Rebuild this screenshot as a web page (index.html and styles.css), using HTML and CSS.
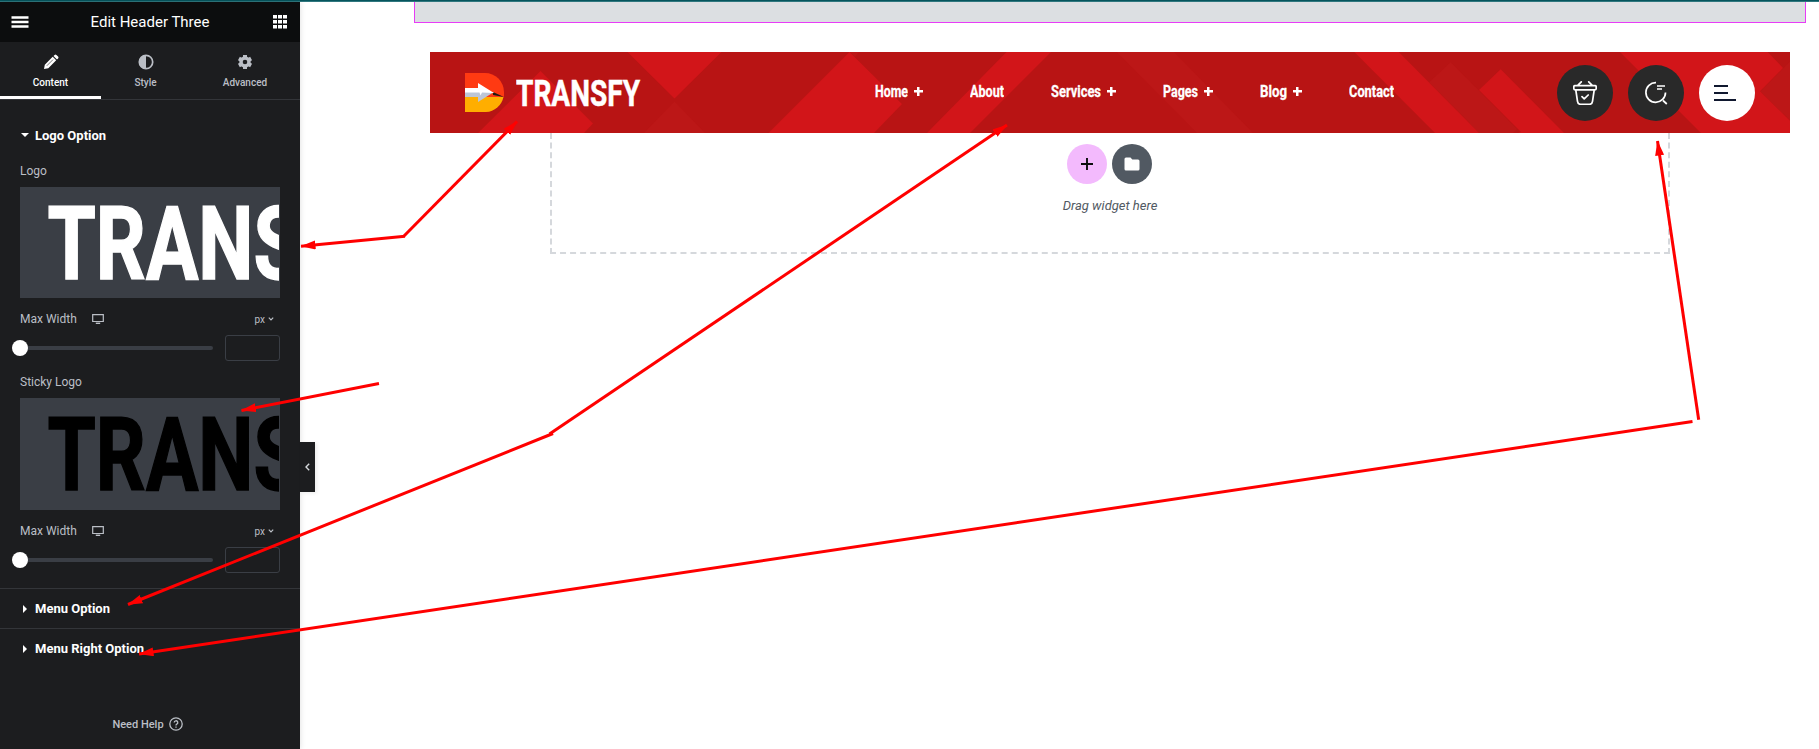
FILE: index.html
```html
<!DOCTYPE html>
<html lang="en">
<head>
<meta charset="utf-8">
<title>Edit Header Three</title>
<link rel="stylesheet" href="styles.css">
</head>
<body>
<div class="topline"></div>
<div class="app">
  <aside class="panel">
    <header class="panel-head">
      <svg width="18" height="12" viewBox="0 0 18 12"><path d="M0.500 1.500h17M0.500 6h17M0.500 10.500h17" stroke="#fff" stroke-width="2.400"/></svg>
      <h1>Edit Header Three</h1>
      <svg width="14" height="14" viewBox="0 0 14 14" fill="#fff"><path d="M0 0h4v3.500H0zM5 0h4v3.500H5zM10 0h4v3.500h-4zM0 5h4v3.500H0zM5 5h4v3.500H5zM10 5h4v3.500h-4zM0 10h4v3.500H0zM5 10h4v3.500H5zM10 10h4v3.500h-4z"/></svg>
    </header>
    <nav class="tabs">
      <div class="tab active">
        <svg width="16" height="16" viewBox="0 0 16 16" fill="#fff"><path d="M1 15l.8-4.300L9.700 2.800l3.500 3.500-7.900 7.900zM10.500 2l1.100-1.100a1.300 1.300 0 0 1 1.800 0l1.700 1.700a1.300 1.300 0 0 1 0 1.800L14 5.500z"/><path d="M3.800 11.800l6.200-6.200" stroke="#1c1d1f" stroke-width=".6"/></svg>
        <span>Content</span>
      </div>
      <div class="tab style">
        <svg width="16" height="16" viewBox="0 0 16 16"><circle cx="8" cy="8" r="6.700" fill="none" stroke="#bbbfc6" stroke-width="1.700"/><path d="M8 1a7 7 0 0 0 0 14z" fill="#bbbfc6"/></svg>
        <span>Style</span>
      </div>
      <div class="tab">
        <svg width="16" height="16" viewBox="0 0 16 16"><circle cx="8" cy="8" r="4" fill="none" stroke="#bbbfc6" stroke-width="3.400"/><g stroke="#bbbfc6" stroke-width="4"><path d="M8 1v2.500M8 12.500V15M1.900 4.500l2.200 1.200M11.900 10.300l2.200 1.200M1.900 11.500l2.200-1.200M11.900 5.700l2.200-1.200"/></g></svg>
        <span>Advanced</span>
      </div>
    </nav>
    <section class="section-open">
      <h2 class="section-title"><i class="caret down"></i>Logo Option</h2>
      <div class="label">Logo</div>
      <div class="preview">
        <svg width="260" height="111"><text class="brand large" x="27.500" y="91.500" textLength="254" lengthAdjust="spacingAndGlyphs">TRANS</text></svg>
      </div>
      <div class="control-row">
        <span>Max Width</span>
        <svg class="device" width="12" height="10" viewBox="0 0 12 10"><path d="M.7.700h10.600v6.800H.7z" fill="none" stroke="#bbbfc6" stroke-width="1.200"/><path d="M3.800 9.300h4.400" stroke="#bbbfc6" stroke-width="1.400"/></svg>
        <span class="unit">px<svg width="6" height="4" viewBox="0 0 6 4"><path d="M.8.700L3 2.900 5.200.700" fill="none" stroke="#bbbfc6" stroke-width="1.200"/></svg></span>
      </div>
      <div class="slider-row"><div class="track"><b></b></div><div class="num"></div></div>
      <div class="label second">Sticky Logo</div>
      <div class="preview sticky">
        <svg width="260" height="112"><text class="brand large black" x="27.500" y="91.500" textLength="254" lengthAdjust="spacingAndGlyphs">TRANS</text></svg>
      </div>
      <div class="control-row">
        <span>Max Width</span>
        <svg class="device" width="12" height="10" viewBox="0 0 12 10"><path d="M.7.700h10.600v6.800H.7z" fill="none" stroke="#bbbfc6" stroke-width="1.200"/><path d="M3.800 9.300h4.400" stroke="#bbbfc6" stroke-width="1.400"/></svg>
        <span class="unit">px<svg width="6" height="4" viewBox="0 0 6 4"><path d="M.8.700L3 2.900 5.200.700" fill="none" stroke="#bbbfc6" stroke-width="1.200"/></svg></span>
      </div>
      <div class="slider-row"><div class="track"><b></b></div><div class="num"></div></div>
    </section>
    <h2 class="section-title closed"><i class="caret right"></i>Menu Option</h2>
    <h2 class="section-title closed"><i class="caret right"></i>Menu Right Option</h2>
    <footer class="help">Need Help
      <svg width="14" height="14" viewBox="0 0 14 14" fill="none" stroke="#bbbfc6"><circle cx="7" cy="7" r="6.200" stroke-width="1.300"/><path d="M5.200 5.600a1.800 1.800 0 1 1 2.600 1.600Q7 7.600 7 8.500M7 9.500v1.200" stroke-width="1.300"/></svg>
    </footer>
    <div class="collapse"><svg width="5" height="8" viewBox="0 0 5 8"><path d="M4.200.700L1 4l3.200 3.300" fill="none" stroke="#d5d8dc" stroke-width="1.400"/></svg></div>
  </aside>
  <main class="canvas">
    <div class="outline"></div>
    <div class="site-header">
      <svg class="pattern" width="1360" height="81" viewBox="430 52 1360 81">
        <g fill="#bc1717"><path d="M674.500 101.500L705 133h-61zM1116.700 52H1174l79 81h-56zM850 52h9l-4 5zM1450.700 62.300L1517 129l-4 4h-34l-50-50.500zM1790 61.700v59L1760 91.300z"/></g>
        <g fill="#d21519"><path d="M540.500 71L593 123.500l-9 9.500H478zM627.500 52h94l-47 46.500zM849.500 52L902 104l-28 29H768.500zM1006.500 52H1051l-81 81h-43zM1354.300 52h44.500l80.200 81h-44zM1500.700 69.300L1564 133h-46l3-1L1479 90zM1620 52h147.700L1783 68l-23 23.300 30 29.400V133h-89z"/></g>
      </svg>
      <div class="logo">
        <svg width="39" height="39" viewBox="0 0 39 39"><path d="M0 24V0h20a19 19 0 0 1 19 19v5z" fill="#ff3a12"/><path d="M0 24h38.500A19 19 0 0 1 21 39H0z" fill="#ffae00"/><path d="M28 19l11 5-11-2z" fill="#201a12"/><path d="M0 19h29L13 29v-5H0z" fill="#bcc6d6"/><path d="M0 15h13v-5l16 10-12-.500-1.500 3-1-3H0z" fill="#fff"/></svg>
        <svg width="128" height="44"><text class="brand small" x="0" y="35" textLength="124" lengthAdjust="spacingAndGlyphs">TRANSFY</text></svg>
      </div>
      <nav class="menu">
        <a><svg width="33" height="22"><text class="word" y="16" textLength="33" lengthAdjust="spacingAndGlyphs">Home</text></svg><i class="plus"></i></a>
        <a><svg width="34" height="22"><text class="word" y="16" textLength="34" lengthAdjust="spacingAndGlyphs">About</text></svg></a>
        <a><svg width="50" height="22"><text class="word" y="16" textLength="50" lengthAdjust="spacingAndGlyphs">Services</text></svg><i class="plus"></i></a>
        <a><svg width="35" height="22"><text class="word" y="16" textLength="35" lengthAdjust="spacingAndGlyphs">Pages</text></svg><i class="plus"></i></a>
        <a><svg width="27" height="22"><text class="word" y="16" textLength="27" lengthAdjust="spacingAndGlyphs">Blog</text></svg><i class="plus"></i></a>
        <a><svg width="45" height="22"><text class="word" y="16" textLength="45" lengthAdjust="spacingAndGlyphs">Contact</text></svg></a>
      </nav>
      <div class="actions">
        <span class="round"><svg width="24" height="24" viewBox="0 0 24 24" fill="none" stroke="#fff" stroke-width="1.700" stroke-linecap="round" stroke-linejoin="round"><path d="M8.300.800L5 4.200M15.700.800L19 4.200M2 4.600h20q1.200 0 1.200 1.200v1.600q0 1.400-1.400 1.400H2.200Q.8 8.800.8 7.400V5.800q0-1.200 1.200-1.200zM2.800 9l1.700 11.300q.4 3 3 3h9q2.600 0 3-3L21.200 9M9 15.700l2.200 2.200 4-3.900"/></svg></span>
        <span class="round"><svg width="24" height="24" viewBox="0 0 24 24" fill="none" stroke="#fff" stroke-width="1.700"><path d="M12 1.700A9.800 9.800 0 1 0 21.500 11.500M19 19.500l3.800 3.500M13 5h8M13 8h5"/></svg></span>
        <span class="round white"><svg width="26" height="18" viewBox="0 0 26 18"><path d="M0 2h14M0 9h14M0 16h22" stroke="#10182f" stroke-width="2"/></svg></span>
      </div>
    </div>
    <div class="dropzone">
      <div class="add-buttons">
        <span class="add"><svg width="12" height="12" viewBox="0 0 12 12"><path d="M6 0v12M0 6h12" stroke="#0c0d0e" stroke-width="1.900"/></svg></span>
        <span class="add dark"><svg width="16" height="14" viewBox="0 0 16 14"><path d="M2 .500h4.500L8.300 2.500H14A1.500 1.500 0 0 1 15.500 4v8A1.500 1.500 0 0 1 14 13.500H2A1.500 1.500 0 0 1 .5 12V2A1.500 1.500 0 0 1 2 .500z" fill="#fff"/></svg></span>
      </div>
      <p>Drag widget here</p>
    </div>
  </main>
</div>
<svg class="arrows" width="1819" height="749" viewBox="0 0 1819 749">
  <defs><marker id="head" markerUnits="userSpaceOnUse" markerWidth="15" markerHeight="10" refX="14.500" refY="4.500" orient="auto"><path d="M0 0L15 4.500 0 9z" fill="red"/></marker></defs>
  <g stroke="red" stroke-width="3" fill="none" marker-end="url(#head)">
    <path d="M404 236L517 121.500"/><path d="M405 236.300L301 246.300"/><path d="M379 383.500L241.500 410.500"/>
    <path d="M549.500 434L1007 125"/><path d="M553 433.500L128 604.500"/>
    <path d="M1692.500 421.500L139 654"/><path d="M1698.700 419.700L1657.500 141"/>
  </g>
</svg>
</body>
</html>
```
FILE: styles.css
```css
* { box-sizing: border-box; }
body { margin: 0; height: 749px; overflow: hidden; background: #fff; font-family: Roboto, sans-serif; }
svg { display: block; flex: none; }
.topline { height: 2px; background: linear-gradient(#06555d 50%, #2f777e 50%); }
.app { display: flex; height: 747px; }

.panel { position: relative; width: 300px; flex: none; display: flex; flex-direction: column; background: #1c1d1f; color: #bbbfc6; box-shadow: 0 0 6px rgba(0, 0, 0, .14); }
.panel-head { display: flex; align-items: center; justify-content: space-between; height: 40px; padding: 0 13px 0 11px; background: #0c0d0e; }
.panel-head h1 { margin: 0; padding-right: 2px; font-size: 15px; font-weight: 400; color: #fff; }
.tabs { display: flex; height: 58px; border-bottom: 1px solid #333539; }
.tab { flex: 1; display: flex; flex-direction: column; align-items: center; gap: 7px; padding-top: 12px; font-size: 10px; font-weight: 500; line-height: 12px; border-bottom: 3px solid transparent; }
.tab.active { flex: none; width: 101px; color: #fff; border-color: #fff; }
.tab.style { flex: none; width: 89px; }
.section-open { height: 488px; padding: 15px 20px 0; }
.section-title { display: flex; align-items: center; height: 40px; margin: 0; font-size: 13px; font-weight: 700; color: #fff; }
.caret { width: 15px; display: block; }
.caret::before { content: ""; display: block; width: 0; height: 0; }
.down::before { margin-left: 1px; border: 4px solid transparent; border-top-color: #fff; border-bottom: 0; }
.right::before { margin-left: 3px; border: 4px solid transparent; border-left-color: #fff; border-right: 0; }
.closed { padding-left: 20px; border-top: 1px solid #333539; }
.label { height: 32px; line-height: 33px; font-size: 12px; }
.second { margin-top: 5px; }
.preview { height: 111px; background: #3a3e45; overflow: hidden; }
.preview svg { width: 259px; }
.preview.sticky { height: 112px; }
.brand, .word { font-family: Roboto, sans-serif; font-weight: 700; fill: #fff; stroke: #fff; }
.brand.large { font-size: 102px; stroke-width: 1.5px; }
.brand.black { fill: #000; stroke: #000; }
.brand.small { font-size: 37px; stroke-width: .5px; }
.word { font-size: 16.5px; stroke-width: .3px; }
.control-row { display: flex; align-items: center; height: 37px; padding-top: 5px; font-size: 12px; }
.device { margin-left: 15px; }
.unit { display: flex; align-items: center; gap: 3px; margin-left: auto; padding-right: 6px; font-size: 10px; }
.slider-row { display: flex; align-items: center; justify-content: space-between; height: 26px; }
.track { width: 193px; height: 4px; border-radius: 2px; background: #3a3e45; }
.track b { display: block; width: 16px; height: 16px; margin: -6px 0 0 -8.5px; border-radius: 50%; background: #fff; }
.num { width: 55px; height: 26px; border: 1px solid #3a3e45; border-radius: 3px; }
.help { display: flex; align-items: center; justify-content: center; gap: 5px; height: 50px; margin-top: auto; padding-right: 5px; font-size: 11px; font-weight: 500; }
.collapse { position: absolute; left: 300px; top: 440px; width: 15px; height: 50px; display: flex; align-items: center; justify-content: center; background: #1c1d1f; box-shadow: 2px 1px 4px rgba(0, 0, 0, .08); }

.canvas { flex: 1; padding-left: 114px; }
.outline { width: 1392px; height: 21px; border: 1px solid #e73cf6; border-top: 0; background: #dcdfe2; }
.site-header { position: relative; display: flex; align-items: center; width: 1360px; height: 81px; margin: 29px 0 0 16px; padding: 0 35px; background: #b81414; }
.pattern { position: absolute; inset: 0; }
.logo, .menu, .actions { position: relative; display: flex; align-items: center; }
.logo { gap: 12px; width: 410px; }
.menu { gap: 47px; padding-bottom: 2px; }
.menu a { display: flex; align-items: center; gap: 6px; }
.plus { width: 9px; height: 9px; background: linear-gradient(#fff, #fff) center / 9px 2.500px no-repeat, linear-gradient(#fff, #fff) center / 2.500px 9px no-repeat; }
.actions { gap: 15px; margin-left: auto; }
.round { width: 56px; height: 56px; border-radius: 50%; background: #292929; display: flex; align-items: center; justify-content: center; }
.white { background: #fff; }
.dropzone { width: 1120px; height: 121px; margin-left: 136px; padding-top: 11px; border: 2px dashed #d5d8dc; border-top: 0; }
.add-buttons { display: flex; justify-content: center; gap: 5px; padding-right: 2px; }
.add { width: 40px; height: 40px; border-radius: 50%; background: #f3bafd; display: flex; align-items: center; justify-content: center; }
.dark { background: #515962; }
.dropzone p { margin: 14px 0 0; text-align: center; font-size: 13px; line-height: 16px; font-style: italic; color: #515962; }
.arrows { position: absolute; left: 0; top: 0; pointer-events: none; }
```
